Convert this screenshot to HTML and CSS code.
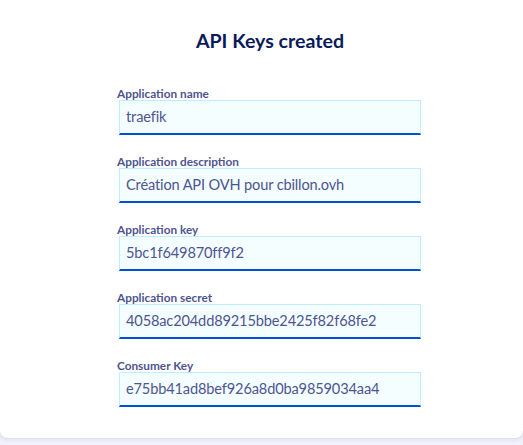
FILE: index.html
```html
<!DOCTYPE html>
<html>
<head>
<meta charset="utf-8">
<link rel="stylesheet" href="styles.css">
</head>
<body>
<div class="card">
  <h1 class="title">API Keys created</h1>
  <div class="fields">
    <div class="field">
      <label class="label">Application name</label>
      <div class="input">traefik</div>
    </div>
    <div class="field">
      <label class="label">Application description</label>
      <div class="input">Création API OVH pour cbillon.ovh</div>
    </div>
    <div class="field">
      <label class="label">Application key</label>
      <div class="input">5bc1f649870ff9f2</div>
    </div>
    <div class="field">
      <label class="label">Application secret</label>
      <div class="input">4058ac204dd89215bbe2425f82f68fe2</div>
    </div>
    <div class="field">
      <label class="label">Consumer Key</label>
      <div class="input">e75bb41ad8bef926a8d0ba9859034aa4</div>
    </div>
  </div>
</div>
</body>
</html>
```
FILE: styles.css
```css
html, body {
  margin: 0;
  padding: 0;
  background: #f1f1f9;
  height: 100%;
}
body {
  font-family: "Source Sans Pro", Lato, "Liberation Sans", sans-serif;
}
.card {
  background: #ffffff;
  border-radius: 0 0 8px 8px;
  height: 438px;
  box-sizing: border-box;
  padding-top: 29px;
  box-shadow: 0 1px 4px rgba(170, 170, 220, 0.4);
}
.title {
  margin: 0;
  text-align: center;
  font-size: 19.6px;
  line-height: 24px;
  font-weight: 700;
  color: #0a1a5a;
  padding-left: 17px;
}
.fields {
  display: flex;
  flex-direction: column;
  gap: 21px;
  margin-top: 35px;
  padding-left: 117px;
}
.field {
  display: flex;
  flex-direction: column;
}
.label {
  font-size: 11.8px;
  line-height: 12px;
  font-weight: 700;
  color: #4d5591;
}
.input {
  margin-left: 2px;
  width: 302px;
  height: 35px;
  box-sizing: border-box;
  background: #f4fdff;
  border: 1px solid #bdeeff;
  border-bottom: 2px solid #0050d7;
  padding: 0 6px;
  font-size: 14.6px;
  letter-spacing: -0.15px;
  line-height: 32px;
  color: #4d5591;
  white-space: nowrap;
}
```
